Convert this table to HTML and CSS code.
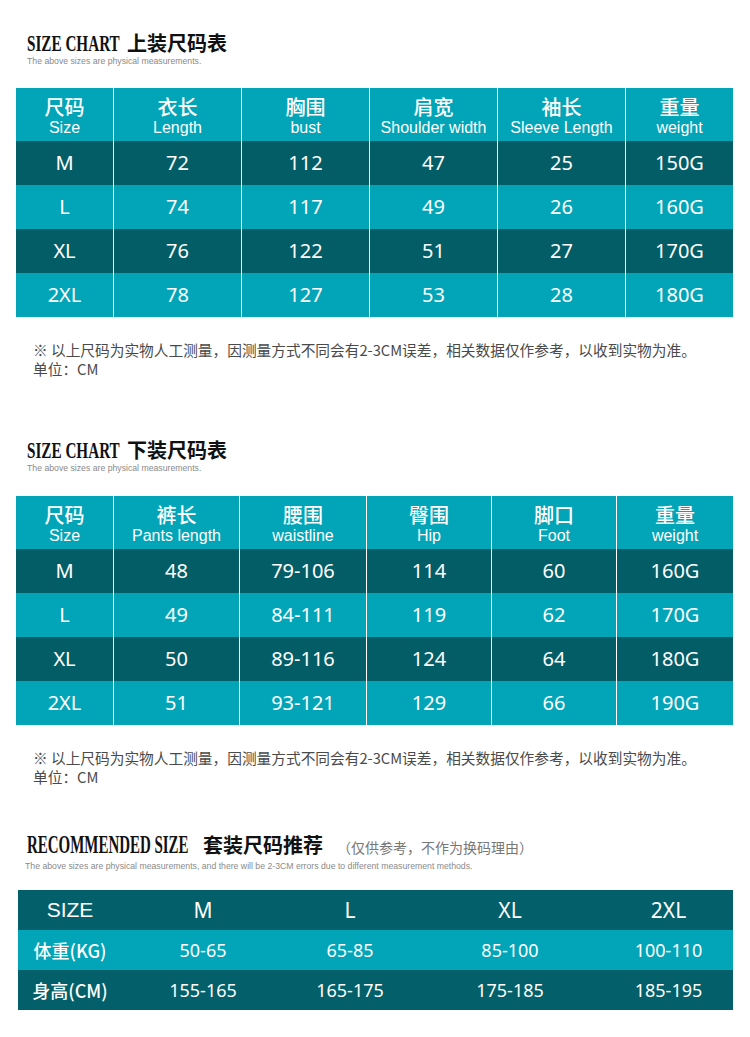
FILE: index.html
```html
<!DOCTYPE html>
<html lang="zh-CN">
<head>
<meta charset="utf-8">
<title>Size Chart</title>
<link rel="stylesheet" href="styles.css">
</head>
<body>
<div class="page">
  <section class="block b1">
    <h2 class="title"><span class="en"><span>SIZE CHART</span></span><span class="cn">上装尺码表</span></h2>
    <p class="sub">The above sizes are physical measurements.</p>
    <div class="chart top">
      <div class="row head">
        <div class="cell"><b>尺码</b><i>Size</i></div>
        <div class="cell"><b>衣长</b><i>Length</i></div>
        <div class="cell"><b>胸围</b><i>bust</i></div>
        <div class="cell"><b>肩宽</b><i>Shoulder width</i></div>
        <div class="cell"><b>袖长</b><i>Sleeve Length</i></div>
        <div class="cell"><b>重量</b><i>weight</i></div>
      </div>
      <div class="row dark">
        <div class="cell">M</div><div class="cell">72</div><div class="cell">112</div><div class="cell">47</div><div class="cell">25</div><div class="cell">150G</div>
      </div>
      <div class="row light">
        <div class="cell">L</div><div class="cell">74</div><div class="cell">117</div><div class="cell">49</div><div class="cell">26</div><div class="cell">160G</div>
      </div>
      <div class="row dark">
        <div class="cell">XL</div><div class="cell">76</div><div class="cell">122</div><div class="cell">51</div><div class="cell">27</div><div class="cell">170G</div>
      </div>
      <div class="row light">
        <div class="cell">2XL</div><div class="cell">78</div><div class="cell">127</div><div class="cell">53</div><div class="cell">28</div><div class="cell">180G</div>
      </div>
    </div>
    <div class="note">
      <p>※ 以上尺码为实物人工测量，因测量方式不同会有2-3CM误差，相关数据仅作参考，以收到实物为准。</p>
      <p>单位：CM</p>
    </div>
  </section>

  <section class="block b2">
    <h2 class="title"><span class="en"><span>SIZE CHART</span></span><span class="cn">下装尺码表</span></h2>
    <p class="sub">The above sizes are physical measurements.</p>
    <div class="chart bottom">
      <div class="row head">
        <div class="cell"><b>尺码</b><i>Size</i></div>
        <div class="cell"><b>裤长</b><i>Pants length</i></div>
        <div class="cell"><b>腰围</b><i>waistline</i></div>
        <div class="cell"><b>臀围</b><i>Hip</i></div>
        <div class="cell"><b>脚口</b><i>Foot</i></div>
        <div class="cell"><b>重量</b><i>weight</i></div>
      </div>
      <div class="row dark">
        <div class="cell">M</div><div class="cell">48</div><div class="cell">79-106</div><div class="cell">114</div><div class="cell">60</div><div class="cell">160G</div>
      </div>
      <div class="row light">
        <div class="cell">L</div><div class="cell">49</div><div class="cell">84-111</div><div class="cell">119</div><div class="cell">62</div><div class="cell">170G</div>
      </div>
      <div class="row dark">
        <div class="cell">XL</div><div class="cell">50</div><div class="cell">89-116</div><div class="cell">124</div><div class="cell">64</div><div class="cell">180G</div>
      </div>
      <div class="row light">
        <div class="cell">2XL</div><div class="cell">51</div><div class="cell">93-121</div><div class="cell">129</div><div class="cell">66</div><div class="cell">190G</div>
      </div>
    </div>
    <div class="note">
      <p>※ 以上尺码为实物人工测量，因测量方式不同会有2-3CM误差，相关数据仅作参考，以收到实物为准。</p>
      <p>单位：CM</p>
    </div>
  </section>

  <section class="block b3">
    <h2 class="title rec-title"><span class="en"><span>RECOMMENDED SIZE</span></span><span class="cn">套装尺码推荐</span><span class="aside">（仅供参考，不作为换码理由）</span></h2>
    <p class="sub">The above sizes are physical measurements, and there will be 2-3CM errors due to different measurement methods.</p>
    <div class="rec">
      <div class="rrow rdark rhead">
        <div class="rc lab">SIZE</div><div class="rc">M</div><div class="rc">L</div><div class="rc">XL</div><div class="rc">2XL</div>
      </div>
      <div class="rrow rlight">
        <div class="rc lab cnl">体重(KG)</div><div class="rc">50-65</div><div class="rc">65-85</div><div class="rc">85-100</div><div class="rc">100-110</div>
      </div>
      <div class="rrow rdark">
        <div class="rc lab cnl">身高(CM)</div><div class="rc">155-165</div><div class="rc">165-175</div><div class="rc">175-185</div><div class="rc">185-195</div>
      </div>
    </div>
  </section>
</div>
</body>
</html>
```

FILE: styles.css
```css
* { box-sizing: border-box; }

body {
  margin: 0;
  background: #ffffff;
}

.page {
  width: 750px;
  height: 1037px;
  overflow: hidden;
  font-family: "Noto Sans", "Noto Sans CJK SC", sans-serif;
  color: #222;
}

.block p { margin: 0; }

.b1 { padding-top: 31px; }
.b2 { padding-top: 60px; }
.b3 { padding-top: 45px; }

.title {
  margin: 0;
  display: flex;
  align-items: baseline;
  height: 24px;
  line-height: 24px;
  padding-left: 27px;
  font-weight: normal;
  white-space: nowrap;
}

.title .en {
  display: inline-block;
  width: 92px;
  font-family: "Liberation Serif", serif;
  font-weight: 700;
  font-size: 23px;
  color: #111;
}

.title .en span {
  display: inline-block;
  transform: scaleX(0.66);
  transform-origin: 0 50%;
}

.title .cn {
  margin-left: 8px;
  font-family: "Noto Sans CJK SC", sans-serif;
  font-weight: 700;
  font-size: 20px;
  color: #111;
}

.rec-title { height: 28px; line-height: 28px; }

.rec-title .en {
  width: 161px;
  font-size: 26px;
}

.rec-title .en span { transform: scaleX(0.575); }

.rec-title .cn { margin-left: 15px; }

.rec-title .aside {
  margin-left: 14px;
  font-family: "Noto Sans CJK SC", sans-serif;
  font-weight: 400;
  font-size: 14px;
  color: #777;
}

.sub {
  padding-left: 27px;
  font-family: "Liberation Sans", sans-serif;
  font-size: 8.7px;
  line-height: 12px;
  color: #8a8a8a;
  white-space: nowrap;
}

.b3 .sub { padding-left: 25px; margin-top: 1px; }

/* size tables */
.chart {
  margin: 21px 0 0 16px;
  width: 717px;
  color: #fff;
}

.b2 .chart { margin-top: 22px; }

.row {
  display: grid;
  height: 44px;
}

.top .row { grid-template-columns: 97px 128px 128px 128px 128px 108px; }
.bottom .row { grid-template-columns: 97px 126px 127px 125px 125px 117px; }

.row.head { height: 53px; background: #02a5b7; }
.row.dark { background: #035d67; }
.row.light { background: #02a5b7; }

.cell {
  border-left: 1px solid #ffffff;
  text-align: center;
  font-size: 20px;
  line-height: 44px;
}

.cell:first-child { border-left: 0; }

.head .cell {
  display: flex;
  flex-direction: column;
  align-items: center;
  padding-top: 6px;
  line-height: normal;
}

.head .cell b {
  font-family: "Noto Sans CJK SC", sans-serif;
  font-weight: 500;
  font-size: 20px;
  line-height: 25px;
}

.head .cell i {
  font-family: "Liberation Sans", sans-serif;
  font-style: normal;
  font-size: 16px;
  line-height: 18px;
  white-space: nowrap;
}

.note {
  margin: 23px 0 0 33px;
  font-family: "Noto Sans CJK SC", sans-serif;
  font-weight: 400;
  font-size: 14.7px;
  line-height: 19px;
  color: #4a4a4a;
  white-space: nowrap;
}

/* recommendation table */
.rec {
  margin: 18px 0 0 18px;
  width: 715px;
  color: #fff;
}

.rrow {
  display: grid;
  grid-template-columns: 104px 162px 132px 188px 129px;
  height: 40px;
  line-height: 40px;
}

.rdark { background: #035f69; }
.rlight { background: #02a5b7; }

.rc {
  text-align: center;
  font-size: 18px;
}

.rhead .rc { font-size: 21px; }
.rhead .lab { font-family: "Liberation Sans", sans-serif; }

.cnl {
  font-family: "Noto Sans CJK SC", sans-serif;
  font-weight: 500;
  font-size: 18px;
}
```
